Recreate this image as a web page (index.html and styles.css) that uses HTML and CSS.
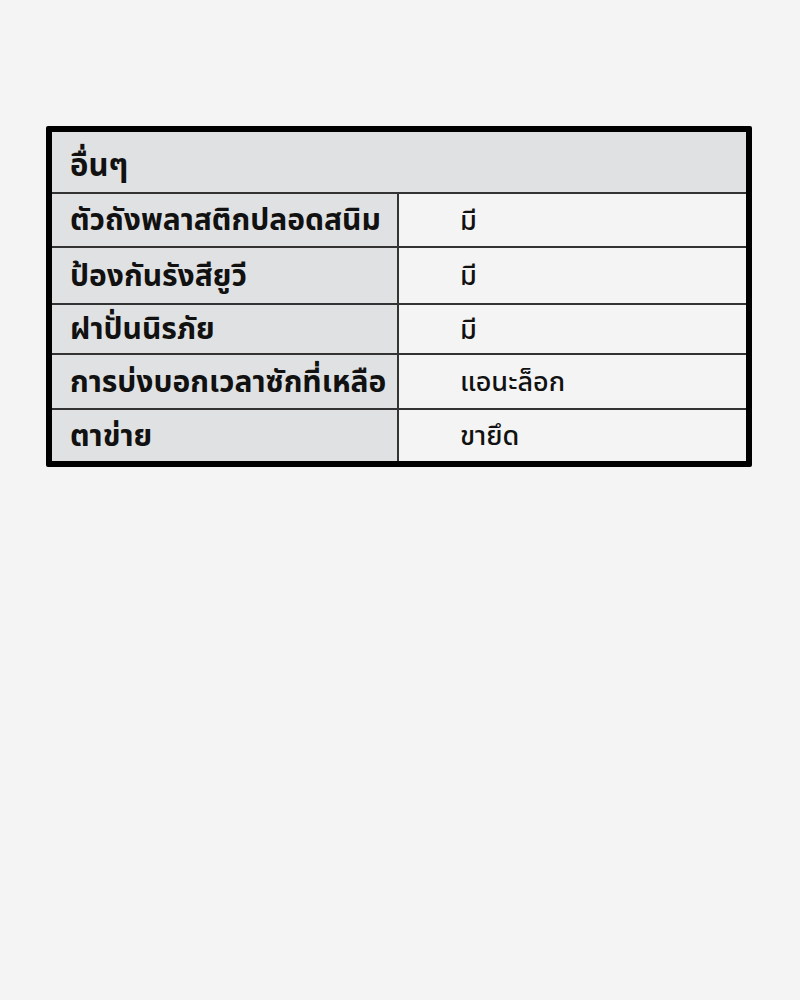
FILE: index.html
```html
<!DOCTYPE html>
<html lang="th">
<head>
<meta charset="utf-8">
<link rel="stylesheet" href="styles.css">
</head>
<body>
<div class="page">
  <div class="spec">
    <div class="head">อื่นๆ</div>
    <div class="row r1"><div class="k">ตัวถังพลาสติกปลอดสนิม</div><div class="v">มี</div></div>
    <div class="row r2"><div class="k">ป้องกันรังสียูวี</div><div class="v">มี</div></div>
    <div class="row r3"><div class="k">ฝาปั่นนิรภัย</div><div class="v">มี</div></div>
    <div class="row r4"><div class="k">การบ่งบอกเวลาซักที่เหลือ</div><div class="v">แอนะล็อก</div></div>
    <div class="row r5"><div class="k">ตาข่าย</div><div class="v">ขายึด</div></div>
  </div>
</div>
</body>
</html>
```
FILE: styles.css
```css
html, body { margin: 0; padding: 0; }
body {
  background: #f4f4f4;
  font-family: "Noto Sans Thai", "Noto Sans", "DejaVu Sans", sans-serif;
  color: #111;
}
.page { width: 800px; height: 1000px; padding-top: 126px; box-sizing: border-box; }
.spec {
  margin-left: 46px;
  width: 706px;
  box-sizing: border-box;
  border: 6px solid #000;
  border-radius: 2px;
  background: #f4f4f4;
}
.head {
  box-sizing: border-box;
  background: #e0e1e2;
  height: 62px;
  display: flex;
  align-items: center;
  padding-left: 18px;
  padding-top: 8px;
  font-size: 31px;
  font-weight: 700;
  border-bottom: 2px solid #333;
}
.row { display: flex; border-bottom: 2px solid #333; }
.row:last-child { border-bottom: none; }
.r1 { height: 52px; }
.r2 { height: 55px; }
.r3 { height: 48px; }
.r4 { height: 53px; }
.r5 { height: 51px; }
.k {
  box-sizing: border-box;
  width: 347px;
  background: #e0e1e2;
  border-right: 2px solid #333;
  display: flex;
  align-items: center;
  padding-left: 18px;
  padding-top: 2px;
  font-size: 30px;
  font-weight: 700;
  white-space: nowrap;
}
.v {
  flex: 1;
  display: flex;
  align-items: center;
  padding-left: 61px;
  padding-top: 2px;
  font-size: 27px;
  font-weight: 500;
}
```
